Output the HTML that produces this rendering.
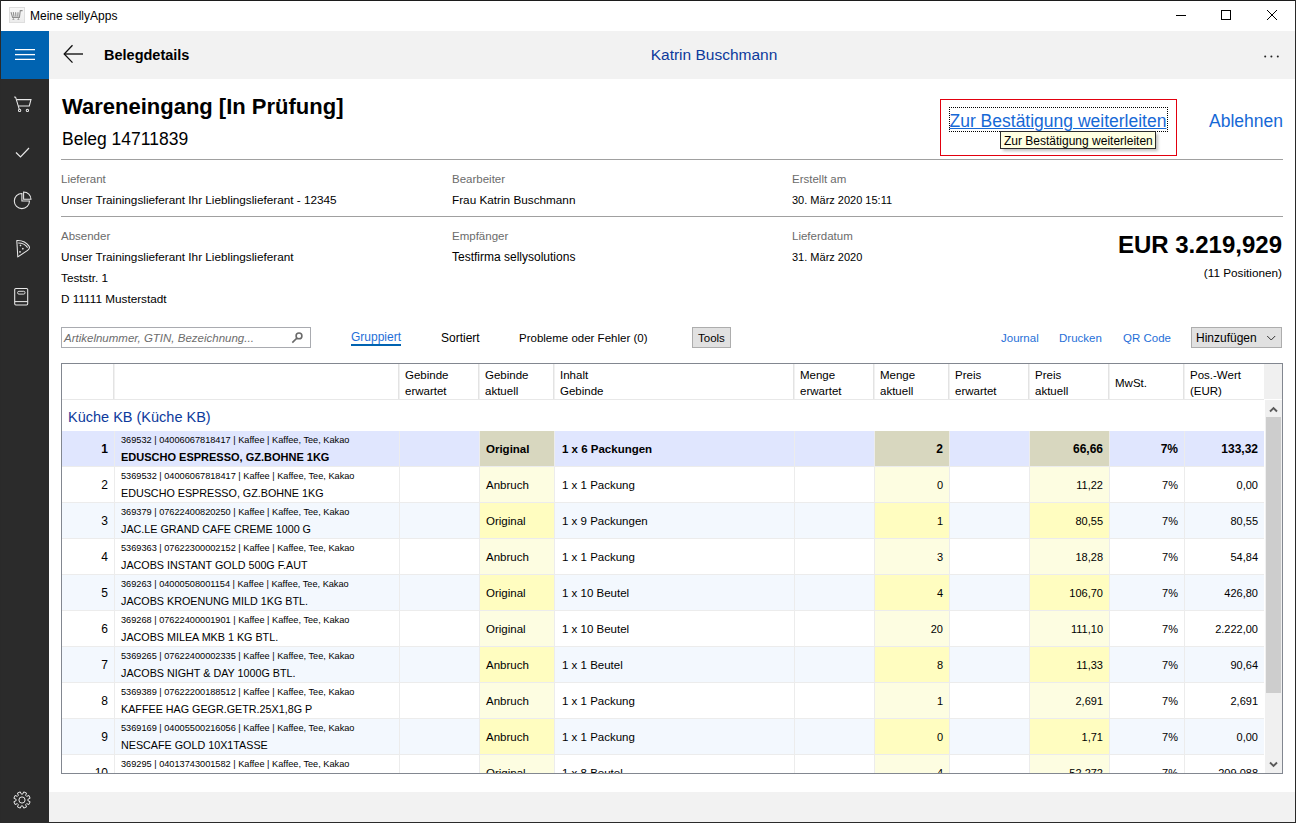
<!DOCTYPE html><html><head><meta charset="utf-8"><style>
*{margin:0;padding:0}
html,body{width:1296px;height:823px;overflow:hidden;background:#fff}
body{position:relative;font-family:"Liberation Sans",sans-serif}
.t{position:absolute;white-space:nowrap}
.r{position:absolute}
</style></head><body><div class="r" style="left:0px;top:0px;width:1296px;height:823px;background:#fff;"></div>
<div class="t" style="top:1px;font-size:12px;line-height:30px;color:#000;left:30px;">Meine sellyApps</div>
<div class="r" style="left:49px;top:31px;width:1246px;height:48px;background:#f2f2f2;"></div>
<div class="r" style="left:1px;top:31px;width:48px;height:791px;background:#2b2b2b;"></div>
<div class="r" style="left:1px;top:31px;width:48px;height:48px;background:#0063b1;"></div>
<div class="r" style="left:49px;top:792px;width:1246px;height:30px;background:#f2f2f2;"></div>
<div class="r" style="left:0px;top:0px;width:1296px;height:1px;background:#1c1c1c;"></div>
<div class="r" style="left:0px;top:0px;width:1px;height:823px;background:#2a2a2a;"></div>
<div class="r" style="left:1295px;top:0px;width:1px;height:823px;background:#2a2a2a;"></div>
<div class="r" style="left:0px;top:822px;width:1296px;height:1px;background:#2a2a2a;"></div>
<div class="t" style="top:40px;font-size:14.5px;line-height:30px;color:#000;font-weight:700;left:104px;">Belegdetails</div>
<div class="t" style="top:40px;font-size:15.5px;line-height:30px;color:#0d3a9c;left:414px;width:600px;text-align:center;">Katrin Buschmann</div>
<div class="t" style="top:92px;font-size:22px;line-height:30px;color:#000;font-weight:700;left:62px;">Wareneingang [In Prüfung]</div>
<div class="t" style="top:124px;font-size:17.5px;line-height:30px;color:#000;left:62px;">Beleg 14711839</div>
<div class="r" style="left:61px;top:159px;width:1222px;height:1px;background:#a0a0a0;"></div>
<div class="t" style="top:106px;font-size:17.5px;line-height:30px;color:#1668d6;left:949.5px;text-decoration:underline;">Zur Bestätigung weiterleiten</div>
<div class="t" style="top:106px;font-size:17.5px;line-height:30px;color:#1668d6;right:13px;text-align:right;">Ablehnen</div>
<div class="t" style="top:164px;font-size:11.5px;line-height:30px;color:#6b6b6b;left:61px;">Lieferant</div>
<div class="t" style="top:185px;font-size:11.75px;line-height:30px;color:#000;left:61px;">Unser Trainingslieferant Ihr Lieblingslieferant - 12345</div>
<div class="t" style="top:164px;font-size:11.5px;line-height:30px;color:#6b6b6b;left:452px;">Bearbeiter</div>
<div class="t" style="top:185px;font-size:11.75px;line-height:30px;color:#000;left:452px;">Frau Katrin Buschmann</div>
<div class="t" style="top:164px;font-size:11.5px;line-height:30px;color:#6b6b6b;left:792px;">Erstellt am</div>
<div class="t" style="top:185px;font-size:11px;line-height:30px;color:#000;left:792px;">30. März 2020 15:11</div>
<div class="r" style="left:61px;top:216px;width:1222px;height:1px;background:#a0a0a0;"></div>
<div class="t" style="top:221px;font-size:11.5px;line-height:30px;color:#6b6b6b;left:61px;">Absender</div>
<div class="t" style="top:242px;font-size:11.75px;line-height:30px;color:#000;left:61px;">Unser Trainingslieferant Ihr Lieblingslieferant</div>
<div class="t" style="top:263px;font-size:11.75px;line-height:30px;color:#000;left:61px;">Teststr. 1</div>
<div class="t" style="top:284px;font-size:11.75px;line-height:30px;color:#000;left:61px;">D 11111 Musterstadt</div>
<div class="t" style="top:221px;font-size:11.5px;line-height:30px;color:#6b6b6b;left:452px;">Empfänger</div>
<div class="t" style="top:242px;font-size:12px;line-height:30px;color:#000;left:452px;">Testfirma sellysolutions</div>
<div class="t" style="top:221px;font-size:11.5px;line-height:30px;color:#6b6b6b;left:792px;">Lieferdatum</div>
<div class="t" style="top:242px;font-size:11px;line-height:30px;color:#000;left:792px;">31. März 2020</div>
<div class="t" style="top:230px;font-size:24px;line-height:30px;color:#000;font-weight:700;right:14px;text-align:right;">EUR 3.219,929</div>
<div class="t" style="top:258px;font-size:11.75px;line-height:30px;color:#000;right:14px;text-align:right;">(11 Positionen)</div>
<div class="r" style="left:61px;top:327px;width:250px;height:21px;background:#fff;box-sizing:border-box;border:1px solid #a9abb0;"></div>
<div class="t" style="top:323px;font-size:11.5px;line-height:30px;color:#6d6d6d;font-style:italic;left:64px;">Artikelnummer, GTIN, Bezeichnung...</div>
<div class="t" style="top:322px;font-size:12px;line-height:30px;color:#1f6fd8;left:351px;">Gruppiert</div>
<div class="r" style="left:351px;top:344px;width:50px;height:2px;background:#0063b1;"></div>
<div class="t" style="top:323px;font-size:12px;line-height:30px;color:#000;left:441px;">Sortiert</div>
<div class="t" style="top:323px;font-size:11.5px;line-height:30px;color:#000;left:519px;">Probleme oder Fehler (0)</div>
<div class="r" style="left:692px;top:327px;width:39px;height:21px;background:#e1e1e1;box-sizing:border-box;border:1px solid #adadad;"></div>
<div class="t" style="top:323px;font-size:11.5px;line-height:30px;color:#000;left:698px;">Tools</div>
<div class="t" style="top:323px;font-size:11.5px;line-height:30px;color:#1f6fd8;left:1001px;">Journal</div>
<div class="t" style="top:323px;font-size:11.5px;line-height:30px;color:#1f6fd8;left:1059px;">Drucken</div>
<div class="t" style="top:323px;font-size:11.5px;line-height:30px;color:#1f6fd8;left:1123px;">QR Code</div>
<div class="r" style="left:1191px;top:327px;width:91px;height:21px;background:#e1e1e1;box-sizing:border-box;border:1px solid #adadad;"></div>
<div class="t" style="top:323px;font-size:12px;line-height:30px;color:#000;left:1196px;">Hinzufügen</div>
<div class="r" style="left:61px;top:363px;width:1222px;height:411px;background:#fff;box-sizing:border-box;border:1px solid #828790;"></div>
<div class="r" style="left:113px;top:364px;width:1px;height:35px;background:#e3e3e3;"></div>
<div class="r" style="left:114px;top:364px;width:1px;height:35px;background:#f1f1f1;"></div>
<div class="r" style="left:398px;top:364px;width:1px;height:35px;background:#e3e3e3;"></div>
<div class="r" style="left:399px;top:364px;width:1px;height:35px;background:#f1f1f1;"></div>
<div class="r" style="left:478px;top:364px;width:1px;height:35px;background:#e3e3e3;"></div>
<div class="r" style="left:479px;top:364px;width:1px;height:35px;background:#f1f1f1;"></div>
<div class="r" style="left:553px;top:364px;width:1px;height:35px;background:#e3e3e3;"></div>
<div class="r" style="left:554px;top:364px;width:1px;height:35px;background:#f1f1f1;"></div>
<div class="r" style="left:793px;top:364px;width:1px;height:35px;background:#e3e3e3;"></div>
<div class="r" style="left:794px;top:364px;width:1px;height:35px;background:#f1f1f1;"></div>
<div class="r" style="left:873px;top:364px;width:1px;height:35px;background:#e3e3e3;"></div>
<div class="r" style="left:874px;top:364px;width:1px;height:35px;background:#f1f1f1;"></div>
<div class="r" style="left:948px;top:364px;width:1px;height:35px;background:#e3e3e3;"></div>
<div class="r" style="left:949px;top:364px;width:1px;height:35px;background:#f1f1f1;"></div>
<div class="r" style="left:1028px;top:364px;width:1px;height:35px;background:#e3e3e3;"></div>
<div class="r" style="left:1029px;top:364px;width:1px;height:35px;background:#f1f1f1;"></div>
<div class="r" style="left:1108px;top:364px;width:1px;height:35px;background:#e3e3e3;"></div>
<div class="r" style="left:1109px;top:364px;width:1px;height:35px;background:#f1f1f1;"></div>
<div class="r" style="left:1183px;top:364px;width:1px;height:35px;background:#e3e3e3;"></div>
<div class="r" style="left:1184px;top:364px;width:1px;height:35px;background:#f1f1f1;"></div>
<div class="r" style="left:1264px;top:364px;width:18px;height:35px;background:#f0f0f0;"></div>
<div class="r" style="left:62px;top:399px;width:1202px;height:1px;background:#e8e8e8;"></div>
<div class="t" style="top:360px;font-size:11.5px;line-height:30px;color:#000;left:405px;">Gebinde</div>
<div class="t" style="top:376px;font-size:11.5px;line-height:30px;color:#000;left:405px;">erwartet</div>
<div class="t" style="top:360px;font-size:11.5px;line-height:30px;color:#000;left:485px;">Gebinde</div>
<div class="t" style="top:376px;font-size:11.5px;line-height:30px;color:#000;left:485px;">aktuell</div>
<div class="t" style="top:360px;font-size:11.5px;line-height:30px;color:#000;left:560px;">Inhalt</div>
<div class="t" style="top:376px;font-size:11.5px;line-height:30px;color:#000;left:560px;">Gebinde</div>
<div class="t" style="top:360px;font-size:11.5px;line-height:30px;color:#000;left:800px;">Menge</div>
<div class="t" style="top:376px;font-size:11.5px;line-height:30px;color:#000;left:800px;">erwartet</div>
<div class="t" style="top:360px;font-size:11.5px;line-height:30px;color:#000;left:880px;">Menge</div>
<div class="t" style="top:376px;font-size:11.5px;line-height:30px;color:#000;left:880px;">aktuell</div>
<div class="t" style="top:360px;font-size:11.5px;line-height:30px;color:#000;left:955px;">Preis</div>
<div class="t" style="top:376px;font-size:11.5px;line-height:30px;color:#000;left:955px;">erwartet</div>
<div class="t" style="top:360px;font-size:11.5px;line-height:30px;color:#000;left:1035px;">Preis</div>
<div class="t" style="top:376px;font-size:11.5px;line-height:30px;color:#000;left:1035px;">aktuell</div>
<div class="t" style="top:360px;font-size:11.5px;line-height:30px;color:#000;left:1190px;">Pos.-Wert</div>
<div class="t" style="top:376px;font-size:11.5px;line-height:30px;color:#000;left:1190px;">(EUR)</div>
<div class="t" style="top:368px;font-size:11.5px;line-height:30px;color:#000;left:1115px;">MwSt.</div>
<div class="t" style="top:402px;font-size:14.5px;line-height:30px;color:#0d3a9c;left:68px;">Küche KB (Küche KB)</div>
<div style="position:absolute;left:62px;top:400px;width:1202px;height:373px;overflow:hidden">
<div class="r" style="left:0px;top:31px;width:1202px;height:35px;background:#e0e6fe;"></div>
<div class="r" style="left:0px;top:66px;width:1202px;height:1px;background:#ececec;"></div>
<div class="r" style="left:418px;top:31px;width:74px;height:35px;background:#d8d7bf;"></div>
<div class="r" style="left:813px;top:31px;width:74px;height:35px;background:#d8d7bf;"></div>
<div class="r" style="left:968px;top:31px;width:79px;height:35px;background:#d8d7bf;"></div>
<div class="r" style="left:52px;top:31px;width:1px;height:36px;background:#ececec;"></div>
<div class="r" style="left:337px;top:31px;width:1px;height:36px;background:#ececec;"></div>
<div class="r" style="left:417px;top:31px;width:1px;height:36px;background:#ececec;"></div>
<div class="r" style="left:492px;top:31px;width:1px;height:36px;background:#ececec;"></div>
<div class="r" style="left:732px;top:31px;width:1px;height:36px;background:#ececec;"></div>
<div class="r" style="left:812px;top:31px;width:1px;height:36px;background:#ececec;"></div>
<div class="r" style="left:887px;top:31px;width:1px;height:36px;background:#ececec;"></div>
<div class="r" style="left:967px;top:31px;width:1px;height:36px;background:#ececec;"></div>
<div class="r" style="left:1047px;top:31px;width:1px;height:36px;background:#ececec;"></div>
<div class="r" style="left:1122px;top:31px;width:1px;height:36px;background:#ececec;"></div>
<div class="t" style="top:34px;font-size:12px;line-height:30px;color:#000;font-weight:700;right:1156px;text-align:right;">1</div>
<div class="t" style="top:25px;font-size:9.2px;line-height:30px;color:#000;left:59px;">369532 | 04006067818417 | Kaffee | Kaffee, Tee, Kakao</div>
<div class="t" style="top:42px;font-size:11px;line-height:30px;color:#000;font-weight:700;left:59px;">EDUSCHO ESPRESSO, GZ.BOHNE 1KG</div>
<div class="t" style="top:34px;font-size:11.5px;line-height:30px;color:#000;font-weight:700;left:424px;">Original</div>
<div class="t" style="top:34px;font-size:11.5px;line-height:30px;color:#000;font-weight:700;left:500px;">1 x 6 Packungen</div>
<div class="t" style="top:34px;font-size:12px;line-height:30px;color:#000;font-weight:700;right:321px;text-align:right;">2</div>
<div class="t" style="top:34px;font-size:12px;line-height:30px;color:#000;font-weight:700;right:161px;text-align:right;">66,66</div>
<div class="t" style="top:34px;font-size:12px;line-height:30px;color:#000;font-weight:700;right:86px;text-align:right;">7%</div>
<div class="t" style="top:34px;font-size:12px;line-height:30px;color:#000;font-weight:700;right:6px;text-align:right;">133,32</div>
<div class="r" style="left:0px;top:67px;width:1202px;height:35px;background:#ffffff;"></div>
<div class="r" style="left:0px;top:102px;width:1202px;height:1px;background:#ececec;"></div>
<div class="r" style="left:418px;top:67px;width:74px;height:35px;background:#fdfde1;"></div>
<div class="r" style="left:813px;top:67px;width:74px;height:35px;background:#fdfde1;"></div>
<div class="r" style="left:968px;top:67px;width:79px;height:35px;background:#fdfde1;"></div>
<div class="r" style="left:52px;top:67px;width:1px;height:36px;background:#ececec;"></div>
<div class="r" style="left:337px;top:67px;width:1px;height:36px;background:#ececec;"></div>
<div class="r" style="left:417px;top:67px;width:1px;height:36px;background:#ececec;"></div>
<div class="r" style="left:492px;top:67px;width:1px;height:36px;background:#ececec;"></div>
<div class="r" style="left:732px;top:67px;width:1px;height:36px;background:#ececec;"></div>
<div class="r" style="left:812px;top:67px;width:1px;height:36px;background:#ececec;"></div>
<div class="r" style="left:887px;top:67px;width:1px;height:36px;background:#ececec;"></div>
<div class="r" style="left:967px;top:67px;width:1px;height:36px;background:#ececec;"></div>
<div class="r" style="left:1047px;top:67px;width:1px;height:36px;background:#ececec;"></div>
<div class="r" style="left:1122px;top:67px;width:1px;height:36px;background:#ececec;"></div>
<div class="t" style="top:70px;font-size:12px;line-height:30px;color:#000;right:1156px;text-align:right;">2</div>
<div class="t" style="top:61px;font-size:9.2px;line-height:30px;color:#000;left:59px;">5369532 | 04006067818417 | Kaffee | Kaffee, Tee, Kakao</div>
<div class="t" style="top:78px;font-size:10.75px;line-height:30px;color:#000;left:59px;">EDUSCHO ESPRESSO, GZ.BOHNE 1KG</div>
<div class="t" style="top:70px;font-size:11.5px;line-height:30px;color:#000;left:424px;">Anbruch</div>
<div class="t" style="top:70px;font-size:11.5px;line-height:30px;color:#000;left:500px;">1 x 1 Packung</div>
<div class="t" style="top:70px;font-size:11px;line-height:30px;color:#000;right:321px;text-align:right;">0</div>
<div class="t" style="top:70px;font-size:11px;line-height:30px;color:#000;right:161px;text-align:right;">11,22</div>
<div class="t" style="top:70px;font-size:11px;line-height:30px;color:#000;right:86px;text-align:right;">7%</div>
<div class="t" style="top:70px;font-size:11px;line-height:30px;color:#000;right:6px;text-align:right;">0,00</div>
<div class="r" style="left:0px;top:103px;width:1202px;height:35px;background:#f3f8fe;"></div>
<div class="r" style="left:0px;top:138px;width:1202px;height:1px;background:#ececec;"></div>
<div class="r" style="left:418px;top:103px;width:74px;height:35px;background:#fffdc0;"></div>
<div class="r" style="left:813px;top:103px;width:74px;height:35px;background:#fffdc0;"></div>
<div class="r" style="left:968px;top:103px;width:79px;height:35px;background:#fffdc0;"></div>
<div class="r" style="left:52px;top:103px;width:1px;height:36px;background:#ececec;"></div>
<div class="r" style="left:337px;top:103px;width:1px;height:36px;background:#ececec;"></div>
<div class="r" style="left:417px;top:103px;width:1px;height:36px;background:#ececec;"></div>
<div class="r" style="left:492px;top:103px;width:1px;height:36px;background:#ececec;"></div>
<div class="r" style="left:732px;top:103px;width:1px;height:36px;background:#ececec;"></div>
<div class="r" style="left:812px;top:103px;width:1px;height:36px;background:#ececec;"></div>
<div class="r" style="left:887px;top:103px;width:1px;height:36px;background:#ececec;"></div>
<div class="r" style="left:967px;top:103px;width:1px;height:36px;background:#ececec;"></div>
<div class="r" style="left:1047px;top:103px;width:1px;height:36px;background:#ececec;"></div>
<div class="r" style="left:1122px;top:103px;width:1px;height:36px;background:#ececec;"></div>
<div class="t" style="top:106px;font-size:12px;line-height:30px;color:#000;right:1156px;text-align:right;">3</div>
<div class="t" style="top:97px;font-size:9.2px;line-height:30px;color:#000;left:59px;">369379 | 07622400820250 | Kaffee | Kaffee, Tee, Kakao</div>
<div class="t" style="top:114px;font-size:10.75px;line-height:30px;color:#000;left:59px;">JAC.LE GRAND CAFE CREME 1000 G</div>
<div class="t" style="top:106px;font-size:11.5px;line-height:30px;color:#000;left:424px;">Original</div>
<div class="t" style="top:106px;font-size:11.5px;line-height:30px;color:#000;left:500px;">1 x 9 Packungen</div>
<div class="t" style="top:106px;font-size:11px;line-height:30px;color:#000;right:321px;text-align:right;">1</div>
<div class="t" style="top:106px;font-size:11px;line-height:30px;color:#000;right:161px;text-align:right;">80,55</div>
<div class="t" style="top:106px;font-size:11px;line-height:30px;color:#000;right:86px;text-align:right;">7%</div>
<div class="t" style="top:106px;font-size:11px;line-height:30px;color:#000;right:6px;text-align:right;">80,55</div>
<div class="r" style="left:0px;top:139px;width:1202px;height:35px;background:#ffffff;"></div>
<div class="r" style="left:0px;top:174px;width:1202px;height:1px;background:#ececec;"></div>
<div class="r" style="left:418px;top:139px;width:74px;height:35px;background:#fdfde1;"></div>
<div class="r" style="left:813px;top:139px;width:74px;height:35px;background:#fdfde1;"></div>
<div class="r" style="left:968px;top:139px;width:79px;height:35px;background:#fdfde1;"></div>
<div class="r" style="left:52px;top:139px;width:1px;height:36px;background:#ececec;"></div>
<div class="r" style="left:337px;top:139px;width:1px;height:36px;background:#ececec;"></div>
<div class="r" style="left:417px;top:139px;width:1px;height:36px;background:#ececec;"></div>
<div class="r" style="left:492px;top:139px;width:1px;height:36px;background:#ececec;"></div>
<div class="r" style="left:732px;top:139px;width:1px;height:36px;background:#ececec;"></div>
<div class="r" style="left:812px;top:139px;width:1px;height:36px;background:#ececec;"></div>
<div class="r" style="left:887px;top:139px;width:1px;height:36px;background:#ececec;"></div>
<div class="r" style="left:967px;top:139px;width:1px;height:36px;background:#ececec;"></div>
<div class="r" style="left:1047px;top:139px;width:1px;height:36px;background:#ececec;"></div>
<div class="r" style="left:1122px;top:139px;width:1px;height:36px;background:#ececec;"></div>
<div class="t" style="top:142px;font-size:12px;line-height:30px;color:#000;right:1156px;text-align:right;">4</div>
<div class="t" style="top:133px;font-size:9.2px;line-height:30px;color:#000;left:59px;">5369363 | 07622300002152 | Kaffee | Kaffee, Tee, Kakao</div>
<div class="t" style="top:150px;font-size:10.75px;line-height:30px;color:#000;left:59px;">JACOBS INSTANT GOLD 500G F.AUT</div>
<div class="t" style="top:142px;font-size:11.5px;line-height:30px;color:#000;left:424px;">Anbruch</div>
<div class="t" style="top:142px;font-size:11.5px;line-height:30px;color:#000;left:500px;">1 x 1 Packung</div>
<div class="t" style="top:142px;font-size:11px;line-height:30px;color:#000;right:321px;text-align:right;">3</div>
<div class="t" style="top:142px;font-size:11px;line-height:30px;color:#000;right:161px;text-align:right;">18,28</div>
<div class="t" style="top:142px;font-size:11px;line-height:30px;color:#000;right:86px;text-align:right;">7%</div>
<div class="t" style="top:142px;font-size:11px;line-height:30px;color:#000;right:6px;text-align:right;">54,84</div>
<div class="r" style="left:0px;top:175px;width:1202px;height:35px;background:#f3f8fe;"></div>
<div class="r" style="left:0px;top:210px;width:1202px;height:1px;background:#ececec;"></div>
<div class="r" style="left:418px;top:175px;width:74px;height:35px;background:#fffdc0;"></div>
<div class="r" style="left:813px;top:175px;width:74px;height:35px;background:#fffdc0;"></div>
<div class="r" style="left:968px;top:175px;width:79px;height:35px;background:#fffdc0;"></div>
<div class="r" style="left:52px;top:175px;width:1px;height:36px;background:#ececec;"></div>
<div class="r" style="left:337px;top:175px;width:1px;height:36px;background:#ececec;"></div>
<div class="r" style="left:417px;top:175px;width:1px;height:36px;background:#ececec;"></div>
<div class="r" style="left:492px;top:175px;width:1px;height:36px;background:#ececec;"></div>
<div class="r" style="left:732px;top:175px;width:1px;height:36px;background:#ececec;"></div>
<div class="r" style="left:812px;top:175px;width:1px;height:36px;background:#ececec;"></div>
<div class="r" style="left:887px;top:175px;width:1px;height:36px;background:#ececec;"></div>
<div class="r" style="left:967px;top:175px;width:1px;height:36px;background:#ececec;"></div>
<div class="r" style="left:1047px;top:175px;width:1px;height:36px;background:#ececec;"></div>
<div class="r" style="left:1122px;top:175px;width:1px;height:36px;background:#ececec;"></div>
<div class="t" style="top:178px;font-size:12px;line-height:30px;color:#000;right:1156px;text-align:right;">5</div>
<div class="t" style="top:169px;font-size:9.2px;line-height:30px;color:#000;left:59px;">369263 | 04000508001154 | Kaffee | Kaffee, Tee, Kakao</div>
<div class="t" style="top:186px;font-size:10.75px;line-height:30px;color:#000;left:59px;">JACOBS KROENUNG MILD 1KG BTL.</div>
<div class="t" style="top:178px;font-size:11.5px;line-height:30px;color:#000;left:424px;">Original</div>
<div class="t" style="top:178px;font-size:11.5px;line-height:30px;color:#000;left:500px;">1 x 10 Beutel</div>
<div class="t" style="top:178px;font-size:11px;line-height:30px;color:#000;right:321px;text-align:right;">4</div>
<div class="t" style="top:178px;font-size:11px;line-height:30px;color:#000;right:161px;text-align:right;">106,70</div>
<div class="t" style="top:178px;font-size:11px;line-height:30px;color:#000;right:86px;text-align:right;">7%</div>
<div class="t" style="top:178px;font-size:11px;line-height:30px;color:#000;right:6px;text-align:right;">426,80</div>
<div class="r" style="left:0px;top:211px;width:1202px;height:35px;background:#ffffff;"></div>
<div class="r" style="left:0px;top:246px;width:1202px;height:1px;background:#ececec;"></div>
<div class="r" style="left:418px;top:211px;width:74px;height:35px;background:#fdfde1;"></div>
<div class="r" style="left:813px;top:211px;width:74px;height:35px;background:#fdfde1;"></div>
<div class="r" style="left:968px;top:211px;width:79px;height:35px;background:#fdfde1;"></div>
<div class="r" style="left:52px;top:211px;width:1px;height:36px;background:#ececec;"></div>
<div class="r" style="left:337px;top:211px;width:1px;height:36px;background:#ececec;"></div>
<div class="r" style="left:417px;top:211px;width:1px;height:36px;background:#ececec;"></div>
<div class="r" style="left:492px;top:211px;width:1px;height:36px;background:#ececec;"></div>
<div class="r" style="left:732px;top:211px;width:1px;height:36px;background:#ececec;"></div>
<div class="r" style="left:812px;top:211px;width:1px;height:36px;background:#ececec;"></div>
<div class="r" style="left:887px;top:211px;width:1px;height:36px;background:#ececec;"></div>
<div class="r" style="left:967px;top:211px;width:1px;height:36px;background:#ececec;"></div>
<div class="r" style="left:1047px;top:211px;width:1px;height:36px;background:#ececec;"></div>
<div class="r" style="left:1122px;top:211px;width:1px;height:36px;background:#ececec;"></div>
<div class="t" style="top:214px;font-size:12px;line-height:30px;color:#000;right:1156px;text-align:right;">6</div>
<div class="t" style="top:205px;font-size:9.2px;line-height:30px;color:#000;left:59px;">369268 | 07622400001901 | Kaffee | Kaffee, Tee, Kakao</div>
<div class="t" style="top:222px;font-size:10.75px;line-height:30px;color:#000;left:59px;">JACOBS MILEA MKB 1 KG BTL.</div>
<div class="t" style="top:214px;font-size:11.5px;line-height:30px;color:#000;left:424px;">Original</div>
<div class="t" style="top:214px;font-size:11.5px;line-height:30px;color:#000;left:500px;">1 x 10 Beutel</div>
<div class="t" style="top:214px;font-size:11px;line-height:30px;color:#000;right:321px;text-align:right;">20</div>
<div class="t" style="top:214px;font-size:11px;line-height:30px;color:#000;right:161px;text-align:right;">111,10</div>
<div class="t" style="top:214px;font-size:11px;line-height:30px;color:#000;right:86px;text-align:right;">7%</div>
<div class="t" style="top:214px;font-size:11px;line-height:30px;color:#000;right:6px;text-align:right;">2.222,00</div>
<div class="r" style="left:0px;top:247px;width:1202px;height:35px;background:#f3f8fe;"></div>
<div class="r" style="left:0px;top:282px;width:1202px;height:1px;background:#ececec;"></div>
<div class="r" style="left:418px;top:247px;width:74px;height:35px;background:#fffdc0;"></div>
<div class="r" style="left:813px;top:247px;width:74px;height:35px;background:#fffdc0;"></div>
<div class="r" style="left:968px;top:247px;width:79px;height:35px;background:#fffdc0;"></div>
<div class="r" style="left:52px;top:247px;width:1px;height:36px;background:#ececec;"></div>
<div class="r" style="left:337px;top:247px;width:1px;height:36px;background:#ececec;"></div>
<div class="r" style="left:417px;top:247px;width:1px;height:36px;background:#ececec;"></div>
<div class="r" style="left:492px;top:247px;width:1px;height:36px;background:#ececec;"></div>
<div class="r" style="left:732px;top:247px;width:1px;height:36px;background:#ececec;"></div>
<div class="r" style="left:812px;top:247px;width:1px;height:36px;background:#ececec;"></div>
<div class="r" style="left:887px;top:247px;width:1px;height:36px;background:#ececec;"></div>
<div class="r" style="left:967px;top:247px;width:1px;height:36px;background:#ececec;"></div>
<div class="r" style="left:1047px;top:247px;width:1px;height:36px;background:#ececec;"></div>
<div class="r" style="left:1122px;top:247px;width:1px;height:36px;background:#ececec;"></div>
<div class="t" style="top:250px;font-size:12px;line-height:30px;color:#000;right:1156px;text-align:right;">7</div>
<div class="t" style="top:241px;font-size:9.2px;line-height:30px;color:#000;left:59px;">5369265 | 07622400002335 | Kaffee | Kaffee, Tee, Kakao</div>
<div class="t" style="top:258px;font-size:10.75px;line-height:30px;color:#000;left:59px;">JACOBS NIGHT &amp; DAY 1000G BTL.</div>
<div class="t" style="top:250px;font-size:11.5px;line-height:30px;color:#000;left:424px;">Anbruch</div>
<div class="t" style="top:250px;font-size:11.5px;line-height:30px;color:#000;left:500px;">1 x 1 Beutel</div>
<div class="t" style="top:250px;font-size:11px;line-height:30px;color:#000;right:321px;text-align:right;">8</div>
<div class="t" style="top:250px;font-size:11px;line-height:30px;color:#000;right:161px;text-align:right;">11,33</div>
<div class="t" style="top:250px;font-size:11px;line-height:30px;color:#000;right:86px;text-align:right;">7%</div>
<div class="t" style="top:250px;font-size:11px;line-height:30px;color:#000;right:6px;text-align:right;">90,64</div>
<div class="r" style="left:0px;top:283px;width:1202px;height:35px;background:#ffffff;"></div>
<div class="r" style="left:0px;top:318px;width:1202px;height:1px;background:#ececec;"></div>
<div class="r" style="left:418px;top:283px;width:74px;height:35px;background:#fdfde1;"></div>
<div class="r" style="left:813px;top:283px;width:74px;height:35px;background:#fdfde1;"></div>
<div class="r" style="left:968px;top:283px;width:79px;height:35px;background:#fdfde1;"></div>
<div class="r" style="left:52px;top:283px;width:1px;height:36px;background:#ececec;"></div>
<div class="r" style="left:337px;top:283px;width:1px;height:36px;background:#ececec;"></div>
<div class="r" style="left:417px;top:283px;width:1px;height:36px;background:#ececec;"></div>
<div class="r" style="left:492px;top:283px;width:1px;height:36px;background:#ececec;"></div>
<div class="r" style="left:732px;top:283px;width:1px;height:36px;background:#ececec;"></div>
<div class="r" style="left:812px;top:283px;width:1px;height:36px;background:#ececec;"></div>
<div class="r" style="left:887px;top:283px;width:1px;height:36px;background:#ececec;"></div>
<div class="r" style="left:967px;top:283px;width:1px;height:36px;background:#ececec;"></div>
<div class="r" style="left:1047px;top:283px;width:1px;height:36px;background:#ececec;"></div>
<div class="r" style="left:1122px;top:283px;width:1px;height:36px;background:#ececec;"></div>
<div class="t" style="top:286px;font-size:12px;line-height:30px;color:#000;right:1156px;text-align:right;">8</div>
<div class="t" style="top:277px;font-size:9.2px;line-height:30px;color:#000;left:59px;">5369389 | 07622200188512 | Kaffee | Kaffee, Tee, Kakao</div>
<div class="t" style="top:294px;font-size:10.75px;line-height:30px;color:#000;left:59px;">KAFFEE HAG GEGR.GETR.25X1,8G P</div>
<div class="t" style="top:286px;font-size:11.5px;line-height:30px;color:#000;left:424px;">Anbruch</div>
<div class="t" style="top:286px;font-size:11.5px;line-height:30px;color:#000;left:500px;">1 x 1 Packung</div>
<div class="t" style="top:286px;font-size:11px;line-height:30px;color:#000;right:321px;text-align:right;">1</div>
<div class="t" style="top:286px;font-size:11px;line-height:30px;color:#000;right:161px;text-align:right;">2,691</div>
<div class="t" style="top:286px;font-size:11px;line-height:30px;color:#000;right:86px;text-align:right;">7%</div>
<div class="t" style="top:286px;font-size:11px;line-height:30px;color:#000;right:6px;text-align:right;">2,691</div>
<div class="r" style="left:0px;top:319px;width:1202px;height:35px;background:#f3f8fe;"></div>
<div class="r" style="left:0px;top:354px;width:1202px;height:1px;background:#ececec;"></div>
<div class="r" style="left:418px;top:319px;width:74px;height:35px;background:#fffdc0;"></div>
<div class="r" style="left:813px;top:319px;width:74px;height:35px;background:#fffdc0;"></div>
<div class="r" style="left:968px;top:319px;width:79px;height:35px;background:#fffdc0;"></div>
<div class="r" style="left:52px;top:319px;width:1px;height:36px;background:#ececec;"></div>
<div class="r" style="left:337px;top:319px;width:1px;height:36px;background:#ececec;"></div>
<div class="r" style="left:417px;top:319px;width:1px;height:36px;background:#ececec;"></div>
<div class="r" style="left:492px;top:319px;width:1px;height:36px;background:#ececec;"></div>
<div class="r" style="left:732px;top:319px;width:1px;height:36px;background:#ececec;"></div>
<div class="r" style="left:812px;top:319px;width:1px;height:36px;background:#ececec;"></div>
<div class="r" style="left:887px;top:319px;width:1px;height:36px;background:#ececec;"></div>
<div class="r" style="left:967px;top:319px;width:1px;height:36px;background:#ececec;"></div>
<div class="r" style="left:1047px;top:319px;width:1px;height:36px;background:#ececec;"></div>
<div class="r" style="left:1122px;top:319px;width:1px;height:36px;background:#ececec;"></div>
<div class="t" style="top:322px;font-size:12px;line-height:30px;color:#000;right:1156px;text-align:right;">9</div>
<div class="t" style="top:313px;font-size:9.2px;line-height:30px;color:#000;left:59px;">5369169 | 04005500216056 | Kaffee | Kaffee, Tee, Kakao</div>
<div class="t" style="top:330px;font-size:10.75px;line-height:30px;color:#000;left:59px;">NESCAFE GOLD 10X1TASSE</div>
<div class="t" style="top:322px;font-size:11.5px;line-height:30px;color:#000;left:424px;">Anbruch</div>
<div class="t" style="top:322px;font-size:11.5px;line-height:30px;color:#000;left:500px;">1 x 1 Packung</div>
<div class="t" style="top:322px;font-size:11px;line-height:30px;color:#000;right:321px;text-align:right;">0</div>
<div class="t" style="top:322px;font-size:11px;line-height:30px;color:#000;right:161px;text-align:right;">1,71</div>
<div class="t" style="top:322px;font-size:11px;line-height:30px;color:#000;right:86px;text-align:right;">7%</div>
<div class="t" style="top:322px;font-size:11px;line-height:30px;color:#000;right:6px;text-align:right;">0,00</div>
<div class="r" style="left:0px;top:355px;width:1202px;height:35px;background:#ffffff;"></div>
<div class="r" style="left:0px;top:390px;width:1202px;height:1px;background:#ececec;"></div>
<div class="r" style="left:418px;top:355px;width:74px;height:35px;background:#fdfde1;"></div>
<div class="r" style="left:813px;top:355px;width:74px;height:35px;background:#fdfde1;"></div>
<div class="r" style="left:968px;top:355px;width:79px;height:35px;background:#fdfde1;"></div>
<div class="r" style="left:52px;top:355px;width:1px;height:36px;background:#ececec;"></div>
<div class="r" style="left:337px;top:355px;width:1px;height:36px;background:#ececec;"></div>
<div class="r" style="left:417px;top:355px;width:1px;height:36px;background:#ececec;"></div>
<div class="r" style="left:492px;top:355px;width:1px;height:36px;background:#ececec;"></div>
<div class="r" style="left:732px;top:355px;width:1px;height:36px;background:#ececec;"></div>
<div class="r" style="left:812px;top:355px;width:1px;height:36px;background:#ececec;"></div>
<div class="r" style="left:887px;top:355px;width:1px;height:36px;background:#ececec;"></div>
<div class="r" style="left:967px;top:355px;width:1px;height:36px;background:#ececec;"></div>
<div class="r" style="left:1047px;top:355px;width:1px;height:36px;background:#ececec;"></div>
<div class="r" style="left:1122px;top:355px;width:1px;height:36px;background:#ececec;"></div>
<div class="t" style="top:358px;font-size:12px;line-height:30px;color:#000;right:1156px;text-align:right;">10</div>
<div class="t" style="top:349px;font-size:9.2px;line-height:30px;color:#000;left:59px;">369295 | 04013743001582 | Kaffee | Kaffee, Tee, Kakao</div>
<div class="t" style="top:366px;font-size:10.75px;line-height:30px;color:#000;left:59px;">KAFFEE</div>
<div class="t" style="top:358px;font-size:11.5px;line-height:30px;color:#000;left:424px;">Original</div>
<div class="t" style="top:358px;font-size:11.5px;line-height:30px;color:#000;left:500px;">1 x 8 Beutel</div>
<div class="t" style="top:358px;font-size:11px;line-height:30px;color:#000;right:321px;text-align:right;">4</div>
<div class="t" style="top:358px;font-size:11px;line-height:30px;color:#000;right:161px;text-align:right;">52,272</div>
<div class="t" style="top:358px;font-size:11px;line-height:30px;color:#000;right:86px;text-align:right;">7%</div>
<div class="t" style="top:358px;font-size:11px;line-height:30px;color:#000;right:6px;text-align:right;">209,088</div>
</div>
<div class="r" style="left:1265px;top:400px;width:17px;height:373px;background:#f0f0f0;"></div>
<div class="r" style="left:1266px;top:417px;width:15px;height:276px;background:#cdcdcd;"></div>

<svg class="r" style="left:15px;top:49px" width="21" height="11"><g stroke="#fff" stroke-width="1.3"><line x1="0" y1="0.6" x2="20" y2="0.6"/><line x1="0" y1="5.6" x2="20" y2="5.6"/><line x1="0" y1="10.4" x2="20" y2="10.4"/></g></svg>

<!-- title icon -->
<svg class="r" style="left:9px;top:7px" width="17" height="17" viewBox="0 0 17 17">
 <defs><linearGradient id="g1" x1="0" y1="0" x2="0" y2="1"><stop offset="0" stop-color="#f8f8f8"/><stop offset="1" stop-color="#ececec"/></linearGradient></defs>
 <rect x="0.5" y="0.5" width="15" height="15" fill="url(#g1)" stroke="#dedede"/>
 <g stroke="#8e8e8e" fill="none" stroke-width="1.1">
  <path d="M2 5.2 L3.6 10.4 L10.4 10.4 L11.3 3.6 L13.6 3.6"/>
  <path d="M4.3 5.2 L5 9.5 M6.6 5.2 L6.9 9.5 M9 5.2 L8.8 9.5"/>
 </g>
 <g fill="#8e8e8e"><path d="M3.2 12.8 L5.6 12.8 L4.4 11 Z M8.2 12.8 L10.6 12.8 L9.4 11 Z"/></g>
</svg>
<!-- window controls -->
<svg class="r" style="left:1170px;top:5px" width="120" height="22">
 <g stroke="#000" stroke-width="1" fill="none" shape-rendering="crispEdges">
  <line x1="6" y1="10.5" x2="16" y2="10.5"/>
  <rect x="51.5" y="5.5" width="9" height="9"/>
 </g>
 <g stroke="#000" stroke-width="1" fill="none">
  <line x1="97" y1="5" x2="107" y2="15"/><line x1="107" y1="5" x2="97" y2="15"/>
 </g>
</svg>
<!-- back arrow -->
<svg class="r" style="left:60px;top:42px" width="26" height="24">
 <g stroke="#111" stroke-width="1.3" fill="none">
  <line x1="4.4" y1="12" x2="23" y2="12" stroke="#1c1c1c" stroke-width="1.45"/><polyline points="12.5,3.2 4.2,12 12.5,20.6"/>
 </g>
</svg>
<!-- more dots -->
<svg class="r" style="left:1260px;top:52px" width="24" height="8">
 <g fill="#222"><circle cx="5.2" cy="4.4" r="1"/><circle cx="11.4" cy="4.4" r="1"/><circle cx="17.8" cy="4.4" r="1"/></g>
</svg>
<!-- sidebar icons -->
<svg class="r" style="left:10px;top:92px" width="26" height="24">
 <g stroke="#e8e8e8" stroke-width="1.05" fill="none">
  <path d="M4.1 5 L5.6 5.2 L9.2 17.2"/>
  <path d="M6.4 7.6 L21 7.6 L19.3 14 L8.3 14"/>
  <circle cx="9.6" cy="18.4" r="1.15"/><circle cx="17.4" cy="18.4" r="1.15"/>
 </g>
</svg>
<svg class="r" style="left:10px;top:143px" width="26" height="20">
 <polyline points="6,9.5 10.5,14 19,5" stroke="#e8e8e8" stroke-width="1.2" fill="none"/>
</svg>
<svg class="r" style="left:10px;top:188px" width="26" height="26">
 <g stroke="#e8e8e8" stroke-width="1.05" fill="none">
  <path d="M11.9 5.4 A7.6 7.6 0 1 0 19.5 13 L11.9 13 Z"/>
  <path d="M13.6 3.9 L13.6 11.3 L21 11.3 A7.4 7.4 0 0 0 13.6 3.9 Z"/>
 </g>
</svg>
<svg class="r" style="left:10px;top:236px" width="26" height="26">
 <g stroke="#e8e8e8" stroke-width="1.05" fill="none" stroke-linejoin="round">
  <path d="M6.8 4.6 Q15 4.2 19.2 10.4 Q20.2 12.6 17.6 14.4 L7.8 20.9 Z"/>
  <path d="M8.2 7 Q14.6 7 17.6 11.6"/>
 </g>
 <g stroke="#e8e8e8" stroke-width="0.9"><path d="M9.7 9.5 L11.3 9.5 M10.5 8.7 L10.5 10.3 M12 12.7 L13.6 12.7 M12.8 11.9 L12.8 13.5 M9.2 15.9 L10.8 15.9 M10 15.1 L10 16.7"/></g>
</svg>
<svg class="r" style="left:10px;top:284px" width="26" height="26">
 <g stroke="#e8e8e8" stroke-width="1.05" fill="none">
  <rect x="4.7" y="4.4" width="13" height="16.6" rx="1.2"/>
  <line x1="4.7" y1="17.6" x2="17.7" y2="17.6"/>
  <rect x="7.6" y="7.3" width="7.4" height="2.8" rx="1.3" stroke-width="0.95"/>
 </g>
</svg>
<svg class="r" style="left:9px;top:786.5px" width="26" height="26">
 <g stroke="#e8e8e8" stroke-width="1" fill="none" stroke-linejoin="miter">
  <path d="M13.67 7.14 L14.73 4.88 L17.52 6.04 L16.67 8.38 L17.62 9.33 L19.96 8.48 L21.12 11.27 L18.86 12.33 L18.86 13.67 L21.12 14.73 L19.96 17.52 L17.62 16.67 L16.67 17.62 L17.52 19.96 L14.73 21.12 L13.67 18.86 L12.33 18.86 L11.27 21.12 L8.48 19.96 L9.33 17.62 L8.38 16.67 L6.04 17.52 L4.88 14.73 L7.14 13.67 L7.14 12.33 L4.88 11.27 L6.04 8.48 L8.38 9.33 L9.33 8.38 L8.48 6.04 L11.27 4.88 L12.33 7.14 Z"/>
  <circle cx="13" cy="13" r="3.1"/>
 </g>
</svg>
<!-- search icon -->
<svg class="r" style="left:288px;top:329px" width="18" height="17">
 <g stroke="#6a6a6a" stroke-width="1.6" fill="none"><circle cx="11" cy="6.9" r="2.9"/><line x1="8.9" y1="9.1" x2="4.3" y2="13.6"/></g>
</svg>
<!-- dropdown chevron -->
<svg class="r" style="left:1265px;top:332px" width="16" height="12">
 <polyline points="2.2,4 6.2,8 10.2,4" stroke="#333" stroke-width="1" fill="none"/>
</svg>
<!-- scroll arrows -->
<svg class="r" style="left:1265px;top:402px" width="17" height="14">
 <polyline points="5,9.5 8.5,6 12,9.5" stroke="#5a5a5a" stroke-width="1.9" fill="none"/>
</svg>
<svg class="r" style="left:1265px;top:758px" width="17" height="14">
 <polyline points="5,4.5 8.5,8 12,4.5" stroke="#5a5a5a" stroke-width="1.9" fill="none"/>
</svg>
<!-- red rect -->
<div class="r" style="left:940px;top:99px;width:237px;height:57px;box-sizing:border-box;border:1px solid #e2000e"></div>
<!-- focus rect -->
<div class="r" style="left:949px;top:107px;width:219px;height:25px;box-sizing:border-box;border:1px dotted #000"></div>
<!-- tooltip -->
<div class="r" style="left:1003px;top:134px;width:155px;height:17px;background:rgba(0,0,0,0.25);filter:blur(1.5px)"></div>
<div class="r" style="left:1000px;top:131px;width:156px;height:18px;box-sizing:border-box;background:#ffffe1;border:1px solid #2b2b2b"></div>

<div class="t" style="top:126px;font-size:12px;line-height:30px;color:#000;left:1004px;">Zur Bestätigung weiterleiten</div></body></html>
